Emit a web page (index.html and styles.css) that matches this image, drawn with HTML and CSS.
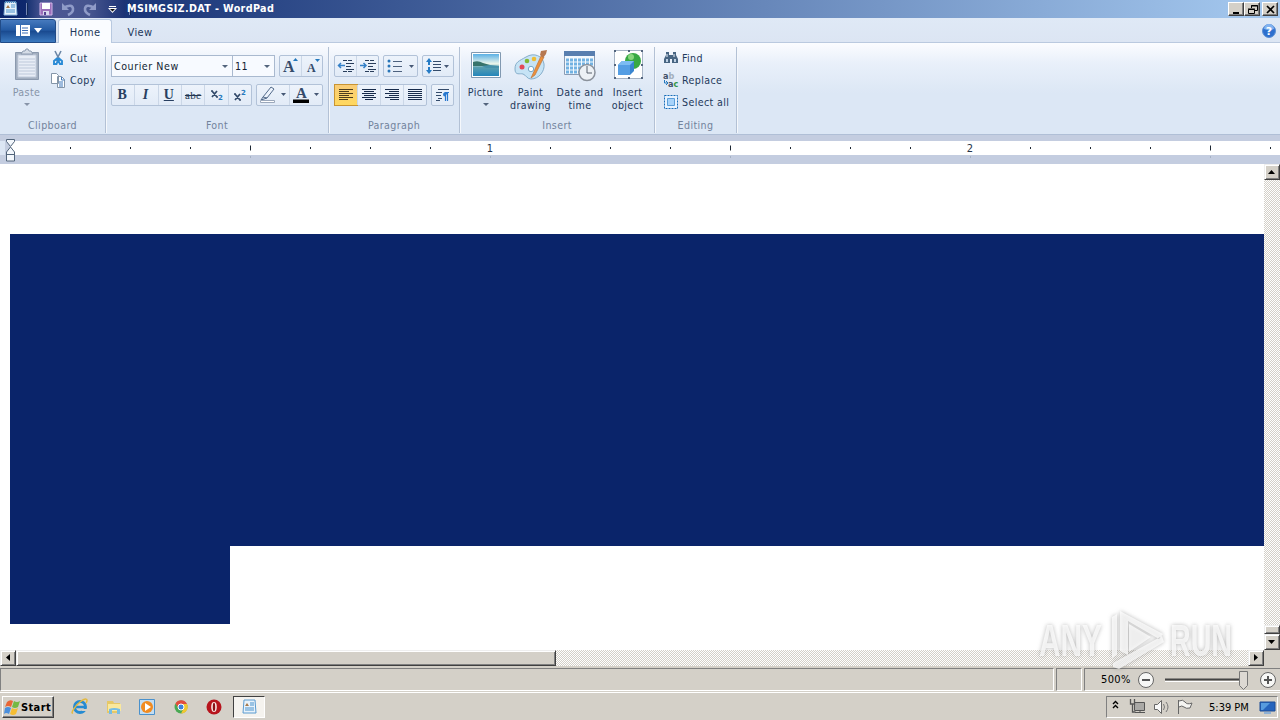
FILE: index.html
```html
<!DOCTYPE html>
<html lang="en">
<head>
<meta charset="utf-8">
<title>MSIMGSIZ.DAT - WordPad</title>
<link rel="stylesheet" href="styles.css">
</head>
<body>
<div class="window">
  <header class="titlebar">
    <svg class="app-icon" width="18" height="18"><path d="M4 2h11l1 13H3z" fill="#e8f2fa" stroke="#8db9dd"/><path d="M4 2h11" stroke="#4c89bd" stroke-width="2" stroke-dasharray="1 1"/><path d="M5 8l2-3 2 3z" fill="#a4794c"/><path d="M10 5h4M10 7h4M5 10h9M5 12h9" stroke="#4b93cd"/></svg>
    <div class="quick">
      <i class="qsep"></i>
      <svg class="save" width="14" height="14"><path d="M1 1h12v12H1z" fill="#9b6fb9" stroke="#d3b5e8"/><path d="M3 1h8v6H3z" fill="#fff"/><path d="M4 9h6v4H4z" fill="#d8d9ee"/><path d="M5 10h2v3H5z" fill="#55408f"/></svg>
      <svg class="undo" width="14" height="14"><path d="M3 5.500q8-4 9 1 .5 4-5 6.500" fill="none" stroke="#8f9bc8" stroke-width="2.600"/><path d="M1 1v7h7z" fill="#8f9bc8"/></svg>
      <svg class="redo" width="14" height="14"><path d="M11 5.500q-8-4-9 1-.5 4 5 6.500" fill="none" stroke="#8f9bc8" stroke-width="2.600"/><path d="M13 1v7H6z" fill="#8f9bc8"/></svg>
      <svg class="more" width="9" height="8"><path d="M1 1.500h7" stroke="#fff"/><path d="M0 3h9L4.500 8z" fill="#fff"/><path d="M2 4h5L4.500 6.500z" fill="#111"/></svg>
      <i class="qsep qsep-end"></i>
    </div>
    <h1 class="title">MSIMGSIZ.DAT - WordPad</h1>
    <div class="controls">
      <svg class="wbtn" width="16" height="14"><path d="M4 10h6" stroke="#000" stroke-width="2"/></svg>
      <svg class="wbtn" width="16" height="14"><path d="M6.500 5V2.500h6v5H10M6 3h7M3.500 6.500h6v4h-6zM3 6h7" fill="none" stroke="#000"/></svg>
      <svg class="wbtn wclose" width="16" height="14"><path d="M4 3l7 7M11 3l-7 7" stroke="#000" stroke-width="1.700"/></svg>
    </div>
  </header>

  <nav class="tabs">
    <div class="filebtn">
      <svg width="28" height="14"><path d="M0 1h14v11H0z" fill="#fff"/><path d="M4.500 1v11" stroke="#3a6cb5"/><path d="M6 4h6M6 6.500h6M6 9h6" stroke="#3a6cb5" stroke-width="1.200"/><path d="M18 4h8l-4 5z" fill="#fff"/></svg>
    </div>
    <div class="tab active"><span class="t">Home</span></div>
    <div class="tab view"><span class="t">View</span></div>
    <svg class="help" width="14" height="14"><circle cx="7" cy="7" r="6.500" fill="#2d6fce" stroke="#5d8fd2"/><path d="M2 5a5 5 0 0 1 10 0q-5 2-10 0" fill="#80b2f0"/><text x="7" y="11" text-anchor="middle" class="qmark">?</text></svg>
  </nav>

  <section class="ribbon">
    <div class="group clipboard">
      <div class="body">
        <div class="big paste">
          <svg width="28" height="34"><path d="M2.500 4.500h23v27h-23z" fill="#a3afc0" stroke="#8b99ae"/><path d="M5 7h18v22H5z" fill="#e8edf6" stroke="#c1cbdc"/><path d="M8 6l2-3h2l1-2h2l1 2h2l2 3z" fill="#d5dce7" stroke="#8e9cb0"/><path d="M6 11h16M6 14h16M6 17h16M6 20h16M6 23h16M6 26h16" stroke="#bdc8da"/></svg>
          <span class="t">Paste</span><b class="arrow"></b>
        </div>
        <div class="list">
          <div class="item"><svg width="16" height="16"><path d="M5 1l5 10M11 1L6 11" stroke="#6b87a7" stroke-width="1.600"/><path d="M7.500 8L4 11v3h2.500L8 10l2 4h2v-3L8.500 8" fill="none" stroke="#2a8bd6" stroke-width="1.900"/></svg><span class="t">Cut</span></div>
          <div class="item"><svg width="16" height="16"><path d="M1.500 1.500h5l2 2v8h-7zM7.500 4.500h4l3 3v8h-7z" fill="#fff" stroke="#8495a8"/><path d="M11.500 5v3h3M9 10h4M9 12h4M9 14h4" fill="none" stroke="#3d79bd"/></svg><span class="t">Copy</span></div>
        </div>
      </div>
      <div class="caption"><span class="t">Clipboard</span></div>
    </div>

    <div class="group font">
      <div class="body rows">
        <div class="row">
          <div class="combo face"><span class="t">Courier New</span><b class="arrow"></b></div>
          <div class="combo size"><span class="t">11</span><b class="arrow"></b></div>
          <div class="btns grow">
            <div class="btn"><svg width="18" height="18"><text x="2" y="15" class="ser s16">A</text><path d="M12 4h5l-2.500-3z" fill="#2378bd"/></svg></div>
            <div class="btn"><svg width="18" height="18"><text x="4" y="15" class="ser s12">A</text><path d="M12 2h5l-2.500 3z" fill="#2378bd"/></svg></div>
          </div>
        </div>
        <div class="row">
          <div class="btns style">
            <div class="btn"><span class="ser-h">B</span></div>
            <div class="btn"><span class="ser-h it">I</span></div>
            <div class="btn"><span class="ser-h un">U</span></div>
            <div class="btn"><span class="abc">abc</span></div>
            <div class="btn"><svg width="17" height="16"><path d="M4 4l5 6M9 4l-5 6M3 4h2M8 10h2" stroke="#344b6b" stroke-width="1.700"/><text x="10" y="13" class="num">2</text></svg></div>
            <div class="btn"><svg width="17" height="16"><path d="M4 7l5 6M9 7l-5 6M3 7h2M8 13h2" stroke="#344b6b" stroke-width="1.700"/><text x="10" y="8" class="num">2</text></svg></div>
          </div>
          <div class="btns colors">
            <div class="btn"><svg width="29" height="18"><path d="M4 11L12 1l3 2-7 9zM4 11l-2 3 6-2" fill="#edf3fc" stroke="#536b8b"/><path d="M1.500 14.500h14v2h-14z" fill="#fff" stroke="#9ba8bb"/><path d="M22 7h5l-2.500 3z" fill="#465875"/></svg></div>
            <div class="btn"><svg width="29" height="18"><text x="4" y="12" class="ser s15">A</text><path d="M1 13.500h16v3.500H1z" fill="#000"/><path d="M22 7h5l-2.500 3z" fill="#465875"/></svg></div>
          </div>
        </div>
      </div>
      <div class="caption"><span class="t">Font</span></div>
    </div>

    <div class="group paragraph">
      <div class="body rows">
        <div class="row">
          <div class="btns indent">
            <div class="btn"><svg width="18" height="16"><path d="M6 2.500h4M11 2.500h4M9 5.500h8M9 8.500h5M9 11.500h8M6 13.500h4M11 13.500h4" stroke="#283d5b" stroke-width="1.200"/><path d="M1 7.500h7M4 5L1.500 7.500 4 10" fill="none" stroke="#3480c8" stroke-width="1.500"/></svg></div>
            <div class="btn"><svg width="18" height="16"><path d="M6 2.500h4M11 2.500h4M9 5.500h8M9 8.500h5M9 11.500h8M6 13.500h4M11 13.500h4" stroke="#283d5b" stroke-width="1.200"/><path d="M1 7.500h6M4.500 5L7 7.500 4.500 10" fill="none" stroke="#3480c8" stroke-width="1.500"/></svg></div>
          </div>
          <div class="btns bullets"><div class="btn"><svg width="28" height="16"><circle cx="2" cy="3" r="1.500" fill="#2875b8"/><circle cx="2" cy="8" r="1.500" fill="#2875b8"/><circle cx="2" cy="13" r="1.500" fill="#2875b8"/><path d="M6 3.500h9M6 8.500h9M6 13.500h9" stroke="#4d617e"/><path d="M22 7h5l-2.500 3z" fill="#465875"/></svg></div></div>
          <div class="btns spacing"><div class="btn"><svg width="25" height="16"><path d="M3 0L0 4h2v3h2V4h2zM3 16l-3-4h2V9h2v3h2z" fill="#267bc5"/><path d="M7 3.500h8M7 6.500h8M7 9.500h8M7 12.500h8" stroke="#344b6b"/><path d="M18 7h5l-2.500 3z" fill="#465875"/></svg></div></div>
        </div>
        <div class="row">
          <div class="btns align">
            <div class="btn on"><svg width="16" height="14"><path d="M1 1.500h14M1 3.500h10M1 5.500h14M1 7.500h10M1 9.500h14M1 11.500h9" stroke="#4d3c1d" stroke-width="1.200"/></svg></div>
            <div class="btn"><svg width="16" height="14"><path d="M1 1.500h14M3 3.500h10M1 5.500h14M3 7.500h10M1 9.500h14M4 11.500h8" stroke="#172b4b"/></svg></div>
            <div class="btn"><svg width="16" height="14"><path d="M1 1.500h14M5 3.500h10M1 5.500h14M5 7.500h10M1 9.500h14M6 11.500h9" stroke="#172b4b"/></svg></div>
            <div class="btn"><svg width="16" height="14"><path d="M1 1.500h14M1 3.500h14M1 5.500h14M1 7.500h14M1 9.500h14M1 11.500h14" stroke="#172b4b"/></svg></div>
          </div>
          <div class="btns para"><div class="btn"><svg width="16" height="16"><path d="M3 2.500h11M1 5.500h6M1 8.500h5M3 11.500h4M1 13.500h4" stroke="#344b6b"/><path d="M13 5.500h-3a2 2 0 0 0 0 4" fill="#2878cf"/><path d="M9.500 5.500H14M10.500 6v8M12.500 6v8" stroke="#2878cf" stroke-width="1.200"/></svg></div></div>
        </div>
      </div>
      <div class="caption"><span class="t">Paragraph</span></div>
    </div>

    <div class="group insert">
      <div class="body">
        <div class="big picture">
          <svg width="32" height="34"><defs><linearGradient id="sky" x1="0" y1="0" x2="0" y2="1"><stop offset="0" stop-color="#5bb0e5"/><stop offset=".45" stop-color="#eef7ea"/><stop offset=".6" stop-color="#5a9faf"/><stop offset="1" stop-color="#2486bb"/></linearGradient></defs><path d="M1.500 4.500h29v25h-29z" fill="#fff" stroke="#8199b1"/><path d="M3 6h26v22H3z" fill="url(#sky)"/><path d="M3 14q5-2 10 1l7 2v1H3z" fill="#37736a"/><path d="M12 18l8-1 9 1v2H16z" fill="#4691aa"/></svg>
          <span class="t">Picture</span><b class="arrow"></b>
        </div>
        <div class="big paint">
          <svg width="34" height="34"><path d="M12 9C20 4 29 8 30 16c1 7-5 15-13 15-4 0-5-4-8-5s-8 2-8-5S5 13 12 9z" fill="#c6e3f5" stroke="#86aecb"/><circle cx="8" cy="19" r="2.500" fill="#e34858"/><circle cx="13" cy="13" r="2.300" fill="#81b934"/><circle cx="20" cy="11" r="2.300" fill="#edbd35"/><circle cx="17" cy="21" r="2.700" fill="#fff" stroke="#76a9ca"/><path d="M27 8L17 30l4-3 9-18z" fill="#ed913b" stroke="#bd763c" stroke-width=".7"/><path d="M26 7l1-4 6-1-1 4-3 4z" fill="#b67851"/></svg>
          <span class="t">Paint</span><span class="t">drawing</span>
        </div>
        <div class="big date">
          <svg width="34" height="34"><path d="M1.500 3.500h30v23h-30z" fill="#f3f8fd" stroke="#8a9cb5"/><path d="M1 3h31v5H1z" fill="#587eaf"/><path d="M3 12h27M3 16h27M3 20h27M3 24h23" stroke="#72b2e2" stroke-width="3" stroke-dasharray="3 1"/><circle cx="24" cy="24.500" r="8" fill="#edf1f5" stroke="#8b929c" stroke-width="1.500"/><path d="M24 18v7h5" fill="none" stroke="#58616d"/></svg>
          <span class="t">Date and</span><span class="t">time</span>
        </div>
        <div class="big object">
          <svg width="32" height="34"><path d="M2.500 2.500h28v28h-28z" fill="#fff" stroke="#a6b3c4"/><circle cx="21" cy="13" r="8" fill="#38a944"/><circle cx="19" cy="9" r="3" fill="#88d67e"/><path d="M6 17l4-4h12v10l-4 4H6z" fill="#3985d0"/><path d="M6 17l4-4h12l-4 4z" fill="#7cbcf3"/><path d="M6 17h12v10H6z" fill="#559ee4"/><path d="M2 2h2v2H2zM16 2h2v2h-2zM29 2h2v2h-2zM2 16h2v2H2zM29 16h2v2h-2zM2 29h2v2H2zM16 29h2v2h-2zM29 29h2v2h-2z" fill="#53657e"/></svg>
          <span class="t">Insert</span><span class="t">object</span>
        </div>
      </div>
      <div class="caption"><span class="t">Insert</span></div>
    </div>

    <div class="group editing">
      <div class="body">
        <div class="list">
          <div class="item"><svg width="16" height="16"><path d="M3 2h3v3h4V2h3v3l2 4v4H9V9H7v4H1V9l2-4z" fill="#486582"/><path d="M3 9h2v3H3zM11 9h2v3h-2z" fill="#bed1e5"/><path d="M4 4v3M11 4v3" stroke="#e9f1f9"/></svg><span class="t">Find</span></div>
          <div class="item"><svg width="16" height="16"><text x="0" y="7" class="rep">a<tspan fill="#a2aebb">b</tspan></text><text x="5" y="15" class="rep">a<tspan fill="#35984a">c</tspan></text><path d="M1.500 8v3H5M3 9l2 2-2 2" fill="none" stroke="#2377bd"/></svg><span class="t">Replace</span></div>
          <div class="item"><svg width="16" height="16"><path d="M1.500 1.500h13v13h-13z" fill="#e8f3ff" stroke="#176cb8" stroke-dasharray="2 1"/><path d="M4.500 4.500h7v7h-7z" fill="#a7d3fa" stroke="#5b9ed8"/></svg><span class="t">Select all</span></div>
        </div>
      </div>
      <div class="caption"><span class="t">Editing</span></div>
    </div>
  </section>

  <svg class="ruler" width="1280" height="29"><path d="M0 0h1280v29H0z" fill="#c4cde0"/><path d="M10 6h1270v14H10z" fill="#fff"/><path d="M0 6h5v14H0z" fill="#dce6f4"/><path d="M70.500 12v2M130.500 12v2M190.500 12v2M310.500 12v2M370.500 12v2M430.500 12v2M550.500 12v2M610.500 12v2M670.500 12v2M790.500 12v2M850.500 12v2M910.500 12v2M1030.500 12v2M1090.500 12v2M1150.500 12v2M1270.500 12v2M250.500 10.500v5M730.500 10.500v5M1210.500 10.500v5" stroke="#1c2632"/><path d="M250.500 21v2M490.500 21v2M730.500 21v2M970.500 21v2M1210.500 21v2" stroke="#a6b1c4"/><text x="490" y="17" text-anchor="middle" class="rnum">1</text><text x="970" y="17" text-anchor="middle" class="rnum">2</text><path d="M6.500 4.500h8v2l-4 5-4-5zM10.500 12l4 5v9h-8v-9zM6.500 19.500h8" fill="#f3f7fc" stroke="#52657b"/></svg>

  <main class="workspace">
    <div class="page"><div class="selection full"></div><div class="selection last"></div></div>
    <div class="vscroll">
      <div class="sbtn"><svg width="8" height="5"><path d="M0 4h7L3.500 0z"/></svg></div>
      <div class="track"></div><div class="vthumb"></div>
      <div class="sbtn"><svg width="8" height="5"><path d="M0 0h7L3.500 4z"/></svg></div>
    </div>
  </main>
  <div class="hscroll">
    <div class="sbtn"><svg width="5" height="8"><path d="M4 0v7L0 3.500z"/></svg></div>
    <div class="hthumb"></div><div class="track"></div>
    <div class="sbtn"><svg width="5" height="8"><path d="M0 0v7l4-3.500z"/></svg></div>
    <div class="corner"></div>
  </div>
  <footer class="status">
    <div class="cell wide"></div><div class="cell small"></div>
    <div class="cell zoom"><span class="sys">500%</span>
      <svg width="144" height="22"><circle cx="11" cy="11" r="7.500" fill="#f7f7f5" stroke="#666"/><path d="M7 11h8" stroke="#555" stroke-width="2"/><path d="M30 10.500h79" stroke="#444" stroke-width="2"/><path d="M30 12.500h79" stroke="#fff"/><path d="M104.500 2.500h8v14l-4 4-4-4z" fill="#ddd9d3" stroke="#777"/><circle cx="133" cy="11" r="7.500" fill="#f7f7f5" stroke="#666"/><path d="M129 11h8M133 7v8" stroke="#555" stroke-width="2"/></svg>
    </div>
  </footer>
  <footer class="taskbar">
    <div class="start"><svg width="17" height="17"><path d="M3 3q3-3 6-1L7 8Q4 6 1 8z" fill="#e96635"/><path d="M10 2q3 2 6 0l-2 6q-3 2-6 0z" fill="#75b943"/><path d="M1 9q3-2 6 0l-2 6q-3-2-5 0z" fill="#4b8fdc"/><path d="M8 9q3 2 6 0l-2 6q-3 2-6 0z" fill="#f5bd32"/></svg><span class="starttext">Start</span></div>
    <div class="pinned">
      <svg width="18" height="18"><circle cx="9" cy="9" r="5.500" fill="none" stroke="#268bd2" stroke-width="3"/><path d="M5 9h9" stroke="#268bd2" stroke-width="2.500"/><path d="M11 11h5v2h-5z" fill="#d4d0c8"/><path d="M2 15C-1 16 4 8 9 4s9-4 6 1" fill="none" stroke="#e4b93e" stroke-width="1.500"/></svg>
      <svg width="18" height="18"><path d="M2 3h6l1 2h6v10H2z" fill="#e6c867"/><path d="M3 6h13v7H3z" fill="#fae89c"/><path d="M4 16v-5q5-2 11 0v5h-3v-4H7v4z" fill="#76bde5"/></svg>
      <svg width="18" height="18"><path d="M1.500 1.500h15v15h-15z" fill="#c3ddf2" stroke="#4a91cc"/><circle cx="9" cy="9" r="6" fill="#f18b21"/><path d="M7 5l6 4-6 4z" fill="#fff"/></svg>
      <svg width="18" height="18"><circle cx="9" cy="9" r="6.500" fill="#49a853"/><path d="M3.500 5.500l4 5L9 6h6a6.500 6.500 0 0 1-6 9.500l3-6z" fill="#f2c731"/><path d="M3.500 5.500A6.500 6.500 0 0 1 15 6H9l-2.500 4z" fill="#e24c3e"/><circle cx="9" cy="9" r="3" fill="#3e82db" stroke="#fff"/></svg>
      <svg width="18" height="18"><circle cx="9" cy="9" r="7.500" fill="#b7141d"/><ellipse cx="9" cy="9" rx="2.800" ry="5" fill="#f9e8e6"/><ellipse cx="9" cy="9" rx="1.200" ry="4.300" fill="#8b1016"/></svg>
    </div>
    <div class="task"><svg width="18" height="18"><path d="M4 2h11l1 13H3z" fill="#e8f2fa" stroke="#5b9bd0"/><path d="M5 8l2-3 2 3z" fill="#a4794c"/><path d="M10 5h4M10 7h4M5 10h9M5 12h9" stroke="#4b93cd"/></svg></div>
    <div class="tray">
      <svg width="96" height="20"><path d="M6 7l2.500-2.500L11 7M6 11l2.500-2.500L11 11" fill="none" stroke="#000" stroke-width="1.400"/><path d="M27.500 5.500h10v8h-10z" fill="#aaa9a6" stroke="#555"/><path d="M28 15.500h10M33 13v3" stroke="#555"/><path d="M23.500 2v5h4V2M25.500 7v8h3" fill="none" stroke="#555" stroke-width="1.300"/><path d="M47.500 7.500h3l4-4v13l-4-4h-3z" fill="#f8f8f8" stroke="#666"/><path d="M56.500 7q2 3 0 6M59 5q4 5 0 10" fill="none" stroke="#777"/><path d="M71.500 3v14M72 4q4-2 6 1t7 1l-2 5q-4 1-6-1t-5 0" fill="#f5f5f2" stroke="#666"/></svg>
      <span class="sys clock">5:39 PM</span>
      <svg width="17" height="16"><path d="M1 3h15v9H1z" fill="#2664bd" stroke="#1c4c96"/><path d="M2 4h9L4 11H2z" fill="#579bde"/><path d="M5 14h7" stroke="#8fb1d5" stroke-width="2"/></svg>
    </div>
  </footer>
  <svg class="watermark" width="204" height="74"><g fill="#fff" fill-opacity=".75"><text x="3" y="52" textLength="63" lengthAdjust="spacingAndGlyphs">ANY</text><text x="134" y="52" textLength="62" lengthAdjust="spacingAndGlyphs">RUN</text><path fill-rule="evenodd" d="M84 7l43 23-4 5-31-18v34l-8-4zM76 13l5-3v41l-5 3zM93 20l22 13-22 15zM77 59l49-27 2 6-45 27-6-2z"/></g></svg>
</div>
</body>
</html>
```
FILE: styles.css
```css
*{box-sizing:border-box}
body{margin:0;overflow:hidden;font-family:"DejaVu Sans Condensed","DejaVu Sans",sans-serif;font-stretch:condensed;font-size:10.6px;letter-spacing:.38px;color:#1e395b}
svg{display:block;flex-shrink:0;overflow:visible;letter-spacing:0}
.window{position:relative;width:1280px;height:720px;display:flex;flex-direction:column;background:#d4d0c8}
.t{white-space:nowrap;line-height:13px}
.titlebar{height:18px;flex-shrink:0;display:flex;align-items:center;background:linear-gradient(90deg,#0a246a,#a6caf0);padding-right:2px}
.app-icon{margin-left:1px}
.quick{display:flex;align-items:center;height:18px;width:99px;margin-left:7px;background:linear-gradient(90deg,#14306f,#4d5795 18%,#46558e 65%,#1b3275)}
.qsep{width:2px;height:12px;flex-shrink:0;border-left:1px solid #7486b3;border-right:1px solid #102857}
.save{margin-left:11px}.undo{margin-left:8px}.redo{margin-left:8px}.more{margin-left:11px}.qsep-end{margin-left:12px}
.title{margin:0 0 0 2px;font-size:10.7px;line-height:18px;color:#fff;white-space:nowrap;letter-spacing:.37px}
.controls{display:flex;margin-left:auto}
.wbtn{background:#d4d0c8;border:1px solid;border-color:#fff #404040 #404040 #fff;box-shadow:inset -1px -1px #808080}
.wclose{margin-left:2px}
.tabs{height:25px;flex-shrink:0;display:flex;background:linear-gradient(#dfe9f6,#dce5f3);border-bottom:1px solid #bac9df;padding-right:4px}
.filebtn{width:56px;height:24px;margin-top:1px;display:flex;align-items:center;padding-left:15px;background:linear-gradient(#467abe,#245aa3 45%,#1a4b91 52%,#3b79bf);border:1px solid #214b87;border-radius:0 3px 0 0}
.tab{height:24px;display:flex;align-items:center;justify-content:center}
.active{width:54px;height:24px;margin:1px 0 0 2px;padding-top:2px;background:#fafcff;border:1px solid #b8c9e0;border-bottom:0;border-radius:3px 3px 0 0}
.tab.view{width:56px;margin-top:2px}
.tab .t{font-size:11px}
.help{margin:6px 0 0 auto}
.qmark{font:bold 11px "DejaVu Sans",sans-serif;fill:#fff}
.ribbon{height:92px;flex-shrink:0;display:flex;background:linear-gradient(#fbfcff,#e9f0fa 22%,#dce7f5 55%,#dce7f5);border-bottom:1px solid #b0bfd6}
.group{height:86px;margin-top:4px;border-right:1px solid #b3c1d5;box-shadow:1px 0 #f5f8fc;display:flex;flex-direction:column}
.body{height:71px;display:flex}
.caption{height:14px;display:flex;justify-content:center;align-items:center;color:#72839c}
.clipboard{width:106px}.font{width:223px}.paragraph{width:131px}.insert{width:195px}.editing{width:82px}
.big{display:flex;flex-direction:column;align-items:center;padding-top:1px}
.big svg{margin-bottom:4px}
.arrow{border:3px solid transparent;border-top-color:#53647d;border-bottom:0;width:6px;height:3px;flex-shrink:0}
.big .arrow{margin-top:4px}
.paste{width:53px;color:#8794a8}.paste .arrow{border-top-color:#8794a8}
.list{display:flex;flex-direction:column}
.item{display:flex;align-items:center;height:22px;gap:3px}
.clipboard .item svg{margin-right:1px}
.clipboard .list{margin-left:-3px}
.rows{flex-direction:column;gap:7px;padding:8px 0 0 5px}
.row{height:22px;display:flex;gap:4px}
.combo{height:22px;background:#f7faff;border:1px solid #a9b9cf;display:flex;align-items:center;justify-content:space-between;padding:0 4px 0 2px;color:#111f33}
.face{width:122px;letter-spacing:.55px}.size{width:43px;margin-left:-5px}
.btns{height:22px;display:flex;border:1px solid #b2c2d8;border-radius:2px;background:linear-gradient(#edf3fb,#e2ebf7)}
.btn{flex:1;display:flex;align-items:center;justify-content:center;min-width:0}
.btn+.btn{border-left:1px solid #cbd7e7}
.grow{width:44px}.style{width:141px}.colors{width:67px}
.ser{font-family:"Liberation Serif",serif;font-weight:bold;fill:#344b6b}.s16{font-size:16px}.s15{font-size:15px}.s12{font-size:12px}
.ser-h{font:bold 14px/20px "Liberation Serif",serif;color:#283f61;letter-spacing:0;margin-left:-2px}.it{font-style:italic}.un{text-decoration:underline}
.abc{font:11px "Liberation Serif",serif;text-decoration:line-through;color:#233752}
.num{font:bold 7px "DejaVu Sans",sans-serif;fill:#2779bd}
.indent{width:45px}.bullets{width:35px}.spacing{width:32px}.align{width:93px}.para{width:23px}
.on{background:linear-gradient(#f8cc78,#ffd85e);box-shadow:0 0 0 1px #c89433}
.picture{width:51px}.paint{width:39px}.date{width:60px}.object{width:35px}
.editing .list{padding-left:8px}
.rep{font:bold 9px "DejaVu Sans Condensed",sans-serif;fill:#405169}
.ruler{height:29px;flex-shrink:0}
.rnum{font:11px "DejaVu Sans Condensed",sans-serif;fill:#253448}
.workspace{height:486px;flex-shrink:0;display:flex;background:#fff}
.page{flex:1;padding:70px 0 0 10px}
.selection{background:#0a246a}.full{height:312px}.last{height:78px;width:220px}
.vscroll{width:16px;display:flex;flex-direction:column}
.track{flex:1;background:repeating-conic-gradient(#d4d0c8 0% 25%,#fff 0% 50%) 0 0/2px 2px}
.sbtn,.hthumb,.vthumb{background:#d4d0c8;border:1px solid;border-color:#eee #404040 #404040 #eee;box-shadow:inset 1px 1px #fff,inset -1px -1px #808080}
.sbtn{width:16px;height:16px;display:flex;align-items:center;justify-content:center;flex-shrink:0}
.vthumb{height:9px}
.hscroll{height:16px;flex-shrink:0;display:flex}
.hthumb{width:540px}.corner{width:16px}
.status{height:27px;flex-shrink:0;display:flex;gap:2px;padding:2px 0 1px;border-bottom:1px solid #fff}
.cell{border:1px solid;border-color:#808080 #fff #fff #808080}
.wide{width:1054px;flex-shrink:0}.small{width:26px;flex-shrink:0}
.zoom{flex:1;display:flex;align-items:center;padding-left:16px;border-right:0;min-width:0}
.sys{font-size:11px;color:#000;white-space:nowrap}
.zoom .sys{width:34px}
.taskbar{height:27px;flex-shrink:0;display:flex;padding:3px 2px 2px;align-items:center}
.start{width:52px;height:22px;display:flex;align-items:center;background:#d4d0c8;border:1px solid;border-color:#fff #404040 #404040 #fff;box-shadow:inset -1px -1px #808080;padding-left:1px}
.starttext{font-size:11px;font-weight:bold;color:#000}
.pinned{display:flex;gap:15.5px;margin-left:17px;width:162px}
.task{width:32px;height:22px;background:#f5f3ef;border:1px solid;border-color:#404040 #fff #fff #404040;display:flex;align-items:center;justify-content:center}
.tray{width:172px;height:22px;margin-left:auto;border:1px solid;border-color:#808080 #fff #fff #808080;display:flex;align-items:center}
.clock{width:50px;margin-left:6px;letter-spacing:0}
.watermark{position:absolute;left:1036px;top:604px;filter:drop-shadow(0 0 2px rgba(90,90,90,.55))}
.watermark text{font:bold 44px "Liberation Sans",sans-serif}
```
